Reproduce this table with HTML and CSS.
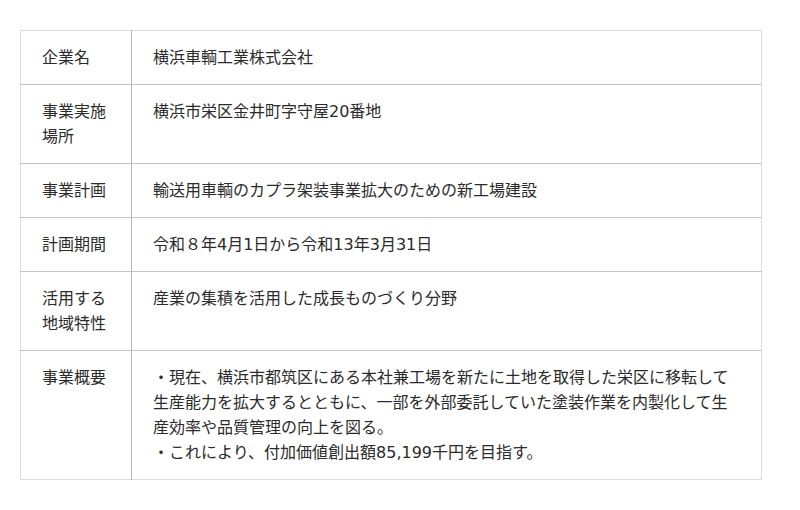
FILE: index.html
```html
<!DOCTYPE html>
<html lang="ja">
<head>
<meta charset="utf-8">
<link rel="stylesheet" href="styles.css">
</head>
<body>
<div class="wrap">
<table class="info">
<tr><th>企業名</th><td>横浜車輌工業株式会社</td></tr>
<tr><th>事業実施場所</th><td>横浜市栄区金井町字守屋20番地</td></tr>
<tr><th>事業計画</th><td>輸送用車輌のカプラ架装事業拡大のための新工場建設</td></tr>
<tr><th>計画期間</th><td>令和８年4月1日から令和13年3月31日</td></tr>
<tr><th>活用する地域特性</th><td>産業の集積を活用した成長ものづくり分野</td></tr>
<tr><th>事業概要</th><td>・現在、横浜市都筑区にある本社兼工場を新たに土地を取得した栄区に移転して生産能力を拡大するとともに、一部を外部委託していた塗装作業を内製化して生産効率や品質管理の向上を図る。<br>・これにより、付加価値創出額85,199千円を目指す。</td></tr>
</table>
</div>
</body>
</html>
```

FILE: styles.css
```css
html, body {
  margin: 0;
  padding: 0;
  background: #fff;
}
.wrap {
  padding: 30px 38px 0 20px;
}
.info {
  width: 742px;
  border-collapse: collapse;
  border: 1px solid #dcdcdc;
  font-family: "DejaVu Sans", "Noto Sans CJK JP", sans-serif;
  font-size: 16px;
  line-height: 25px;
  color: #2b2b2b;
}
.info th,
.info td {
  text-align: left;
  vertical-align: top;
  font-weight: normal;
  padding: 14px 21px;
  border-top: 1px solid #c4c4c4;
}
.info tr:first-child th,
.info tr:first-child td {
  border-top: 1px solid #dcdcdc;
}
.info th {
  width: 68px;
  border-right: 1px solid #b8b8b8;
}
```
